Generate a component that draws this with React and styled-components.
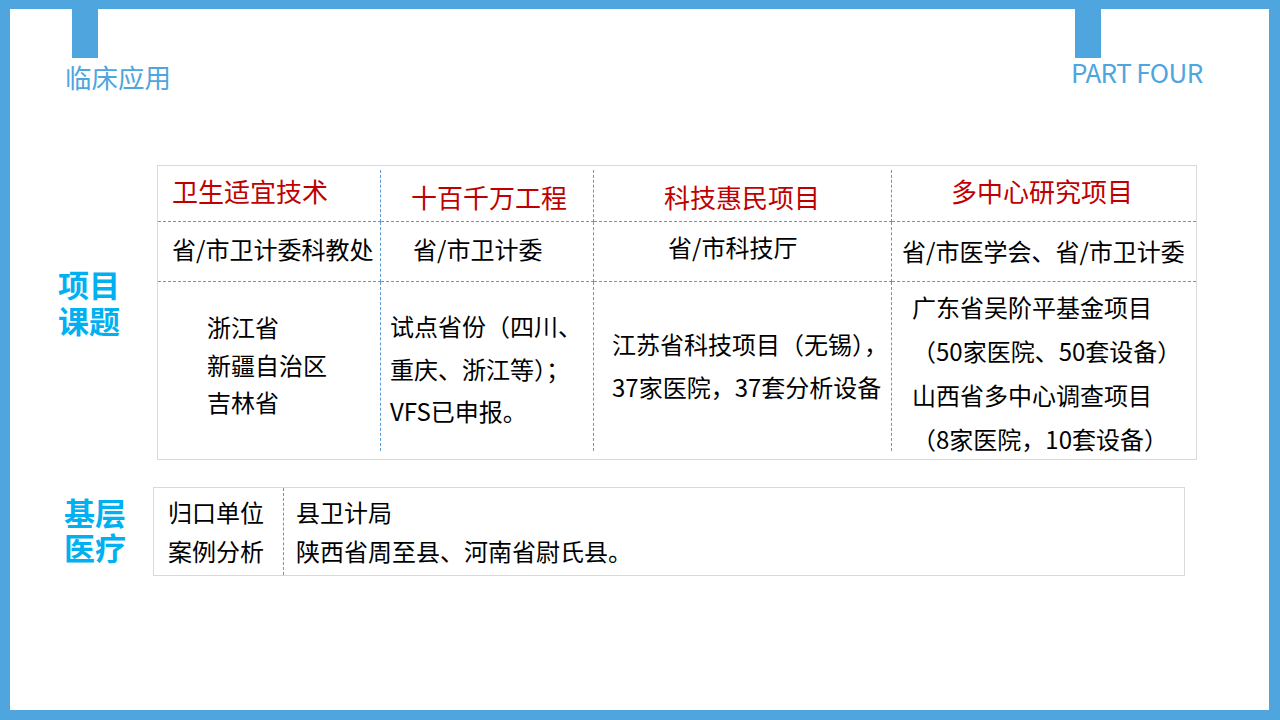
import React from "react"
import styled, { createGlobalStyle } from "styled-components"

const GlobalStyle = createGlobalStyle`
  html, body {
    margin: 0;
    padding: 0;
    background: #fff;
  }
  body {
    font-family: "Microsoft YaHei", "Noto Sans CJK SC", sans-serif;
  }
`

const BLUE = "#4fa5de"

const Slide = styled.div`
  width: 1280px;
  height: 720px;
  box-sizing: border-box;
  border: solid ${BLUE};
  border-width: 9px 11px 10px 10px;
  background: #fff;
  display: flex;
  flex-direction: column;
  overflow: hidden;
`

const Header = styled.header`
  display: flex;
  align-items: flex-start;
  height: 85px;
  padding: 0 58px 0 55px;
`

const Corner = styled.div`
  display: flex;
  flex-direction: column;
  align-items: flex-start;
  width: ${p => p.$w}px;
  margin-left: ${p => (p.$right ? "auto" : "0")};
`

const Tab = styled.div`
  width: 26px;
  height: 49px;
  background: ${BLUE};
  margin-left: ${p => p.$indent}px;
`

const Heading = styled.h1`
  margin: ${p => p.$mt}px 0 0;
  font-weight: 400;
  font-size: ${p => p.$size}px;
  letter-spacing: ${p => p.$track || 0}px;
  line-height: 34px;
  color: ${BLUE};
  white-space: nowrap;
`

const Body = styled.main`
  display: flex;
  flex-direction: column;
  gap: 27px;
  margin-top: 71px;
`

const Section = styled.section`
  display: flex;
  align-items: flex-start;
  padding-left: ${p => p.$indent}px;
`

const Label = styled.div`
  flex: none;
  width: ${p => p.$w}px;
  padding-top: ${p => p.$top}px;
  font-weight: 700;
  font-size: 31px;
  line-height: ${p => p.$lh}px;
  color: #00b0f0;
`

const Table = styled.div`
  display: grid;
  box-sizing: border-box;
  width: ${p => p.$w}px;
  grid-template-columns: ${p => p.$cols};
  grid-template-rows: ${p => p.$rows};
  padding: ${p => p.$pad};
  border: 1px solid #d9d9d9;
`

const Cell = styled.div`
  box-sizing: border-box;
  min-width: 0;
  padding: ${p => p.$pt}px 0 0 ${p => p.$pl}px;
  border-right: ${p => (p.$r ? "1px dashed #5b9bd5" : "none")};
  border-bottom: ${p => (p.$b ? "1px dashed #5b9bd5" : "none")};
  font-size: ${p => (p.$head ? 26 : 24)}px;
  line-height: ${p => p.$lh}px;
  color: ${p => (p.$head ? "#c00000" : "#000")};
  white-space: nowrap;
`

const Line = styled.div``

const projectRows = [
  {
    head: true,
    cells: [
      { pl: 14, pt: 6, lh: 30, lines: ["卫生适宜技术"] },
      { pl: 30, pt: 12, lh: 30, lines: ["十百千万工程"] },
      { pl: 70, pt: 12, lh: 30, lines: ["科技惠民项目"] },
      { pl: 59, pt: 6, lh: 30, lines: ["多中心研究项目"] },
    ],
  },
  {
    cells: [
      { pl: 14, pt: 12, lh: 30, lines: ["省/市卫计委科教处"] },
      { pl: 32, pt: 12, lh: 30, lines: ["省/市卫计委"] },
      { pl: 74, pt: 10, lh: 30, lines: ["省/市科技厅"] },
      { pl: 10, pt: 14, lh: 30, lines: ["省/市医学会、省/市卫计委"] },
    ],
  },
  {
    cells: [
      { pl: 49, pt: 26, lh: 37.5, lines: ["浙江省", "新疆自治区", "吉林省"] },
      { pl: 9, pt: 23, lh: 42.5, lines: ["试点省份（四川、", "重庆、浙江等）；", "VFS已申报。"] },
      { pl: 18, pt: 40, lh: 43, lines: ["江苏省科技项目（无锡），", "37家医院，37套分析设备"] },
      {
        pl: 20,
        pt: 3,
        lh: 44,
        lines: ["广东省吴阶平基金项目", "（50家医院、50套设备）", "山西省多中心调查项目", "（8家医院，10套设备）"],
      },
    ],
  },
]

const baseRows = [
  { pl: 14, pt: 4, lh: 39, lines: ["归口单位", "案例分析"] },
  { pl: 12, pt: 4, lh: 39, lines: ["县卫计局", "陕西省周至县、河南省尉氏县。"] },
]

const App = () => {
  return (
    <>
      <GlobalStyle />
      <Slide>
        <Header>
          <Corner $w={140}>
            <Tab $indent={7} />
            <Heading $size={26.5} $mt={2}>临床应用</Heading>
          </Corner>
          <Corner $w={140} $right>
            <Tab $indent={4} />
            <Heading $size={26} $mt={-3} $track={-0.6}>PART FOUR</Heading>
          </Corner>
        </Header>

        <Body>
          <Section $indent={48}>
            <Label $w={99} $top={101} $lh={36}>
              项目
              <br />
              课题
            </Label>
            <Table
              $w={1040}
              $cols="223px 213px 298px 1fr"
              $rows="52px 60px 169px"
              $pad="4px 0 8px"
            >
              {projectRows.map((row, ri) =>
                row.cells.map((c, ci) => (
                  <Cell
                    key={`${ri}-${ci}`}
                    $head={row.head}
                    $pl={c.pl}
                    $pt={c.pt}
                    $lh={c.lh}
                    $r={ci < row.cells.length - 1}
                    $b={ri < projectRows.length - 1}
                  >
                    {c.lines.map(l => (
                      <Line key={l}>{l}</Line>
                    ))}
                  </Cell>
                ))
              )}
            </Table>
          </Section>

          <Section $indent={54}>
            <Label $w={89} $top={7} $lh={35}>
              基层
              <br />
              医疗
            </Label>
            <Table $w={1032} $cols="130px 1fr" $rows="87px" $pad="0">
              {baseRows.map((c, ci) => (
                <Cell key={ci} $pl={c.pl} $pt={c.pt} $lh={c.lh} $r={ci === 0}>
                  {c.lines.map(l => (
                    <Line key={l}>{l}</Line>
                  ))}
                </Cell>
              ))}
            </Table>
          </Section>
        </Body>
      </Slide>
    </>
  )
}

export default App
